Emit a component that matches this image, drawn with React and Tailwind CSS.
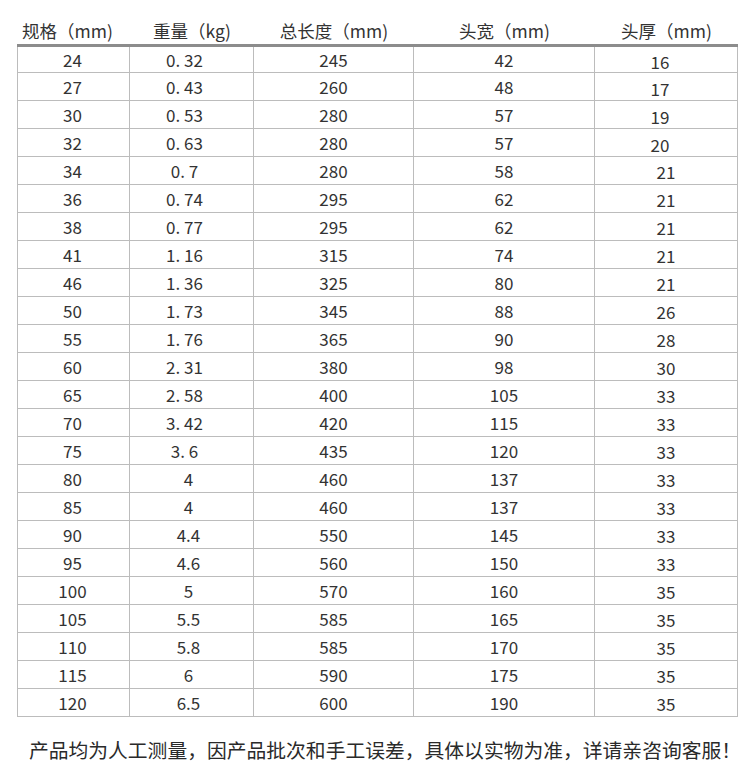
import React from "react";

const rows = [
  ["24", "0. 32", "245", "42", "16"],
  ["27", "0. 43", "260", "48", "17"],
  ["30", "0. 53", "280", "57", "19"],
  ["32", "0. 63", "280", "57", "20"],
  ["34", "0. 7", "280", "58", "21"],
  ["36", "0. 74", "295", "62", "21"],
  ["38", "0. 77", "295", "62", "21"],
  ["41", "1. 16", "315", "74", "21"],
  ["46", "1. 36", "325", "80", "21"],
  ["50", "1. 73", "345", "88", "26"],
  ["55", "1. 76", "365", "90", "28"],
  ["60", "2. 31", "380", "98", "30"],
  ["65", "2. 58", "400", "105", "33"],
  ["70", "3. 42", "420", "115", "33"],
  ["75", "3. 6", "435", "120", "33"],
  ["80", "4", "460", "137", "33"],
  ["85", "4", "460", "137", "33"],
  ["90", "4.4", "550", "145", "33"],
  ["95", "4.6", "560", "150", "33"],
  ["100", "5", "570", "160", "35"],
  ["105", "5.5", "585", "165", "35"],
  ["110", "5.8", "585", "170", "35"],
  ["115", "6", "590", "175", "35"],
  ["120", "6.5", "600", "190", "35"],
];

const headers = ["规格（mm)", "重量（kg)", "总长度（mm)", "头宽（mm)", "头厚（mm)"];

const cols = "grid grid-cols-[113px_124px_160px_181px_143px]";

export default function App() {
  return (
    <div
      className="w-[750px] h-[782px] bg-white text-[#333333] overflow-hidden"
      style={{ fontFamily: '"Noto Sans CJK SC", "Noto Sans", sans-serif' }}
    >
      <div className="ml-[17px] w-[721px]">
        <div className={`${cols} h-[47px] pt-[18px] border-b-[3px] border-[#8c8c8c]`}>
          {headers.map((h, i) => (
            <div
              key={i}
              className={`flex items-center justify-center text-[17.5px] leading-[26px] ${i === 0 ? "pr-[12px]" : ""}`}
            >
              {h}
            </div>
          ))}
        </div>
        {rows.map((r, ri) => (
          <div
            key={ri}
            className={`${cols} ${ri === 0 ? "h-[26px]" : "h-[28px]"} border-b border-[#bcbcbc]`}
          >
            {r.map((v, ci) => (
              <div
                key={ci}
                className={`flex items-center justify-center text-[17px] leading-none border-r border-[#bcbcbc] ${
                  ci === 0 ? "border-l pr-[2px]" : ""
                } ${ci === 1 && v.includes(". ") ? "pr-[14px]" : ""} ${
                  ci === 1 && !v.includes(". ") ? "pr-[6px]" : ""
                } ${ci === 4 && ri < 4 ? "pr-[12px] pt-[3px]" : ""} ${
                  ci === 4 && ri >= 4 ? "pt-[2px]" : ""
                }`}
              >
                {v}
              </div>
            ))}
          </div>
        ))}
      </div>
      <div className="mt-[19px] flex justify-center pl-[20px] text-[19.8px] leading-[28px] text-[#2a2a2a]">
        产品均为人工测量，因产品批次和手工误差，具体以实物为准，详请亲咨询客服！
      </div>
    </div>
  );
}
